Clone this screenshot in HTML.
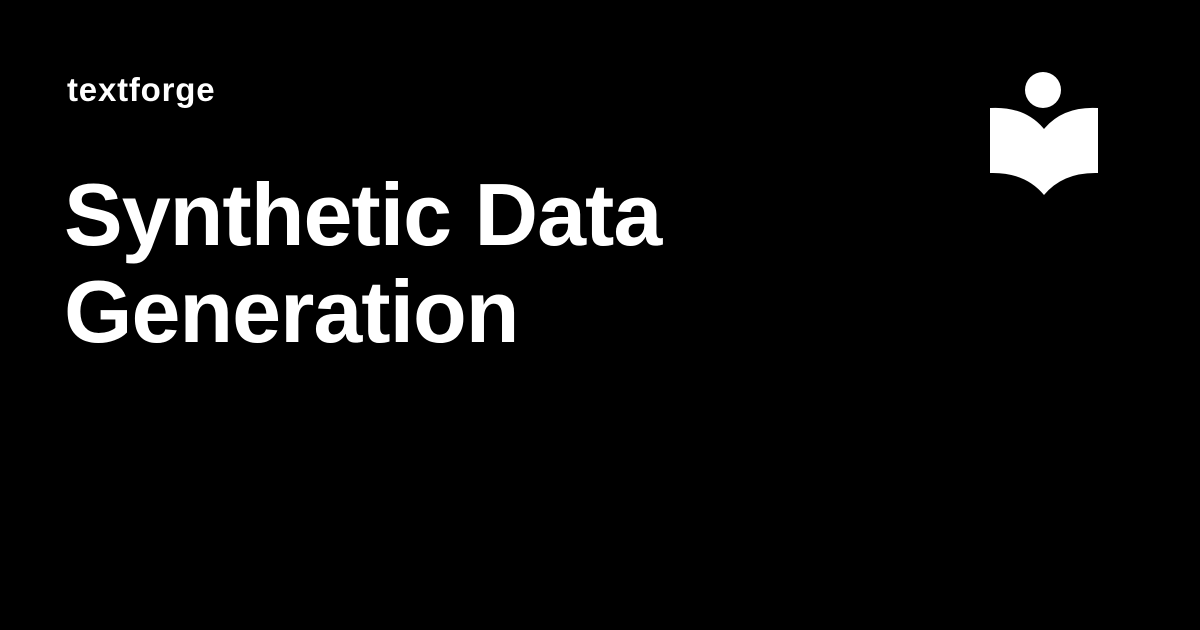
<!DOCTYPE html>
<html><head><style>
html,body{margin:0;padding:0;background:#000;width:1200px;height:630px;overflow:hidden}
body{position:relative;font-family:"Liberation Sans",sans-serif;color:#fff;font-weight:bold}
.brand{position:absolute;left:67px;top:73px;font-size:33px;line-height:33px;letter-spacing:0.8px}
.title{position:absolute;left:64px;top:166px;font-size:88px;line-height:97px;letter-spacing:-1px;margin:0}
svg{position:absolute;left:0;top:0}
</style></head><body>
<div class="brand">textforge</div>
<h1 class="title">Synthetic Data<br>Generation</h1>
<svg width="1200" height="630"><circle cx="1043" cy="90" r="18" fill="#fff"/>
<path d="M990 108 Q1025 106 1044 129 Q1063 106 1098 108 L1098 173 Q1063 172 1044 195 Q1025 172 990 173 Z" fill="#fff"/></svg>
</body></html>
